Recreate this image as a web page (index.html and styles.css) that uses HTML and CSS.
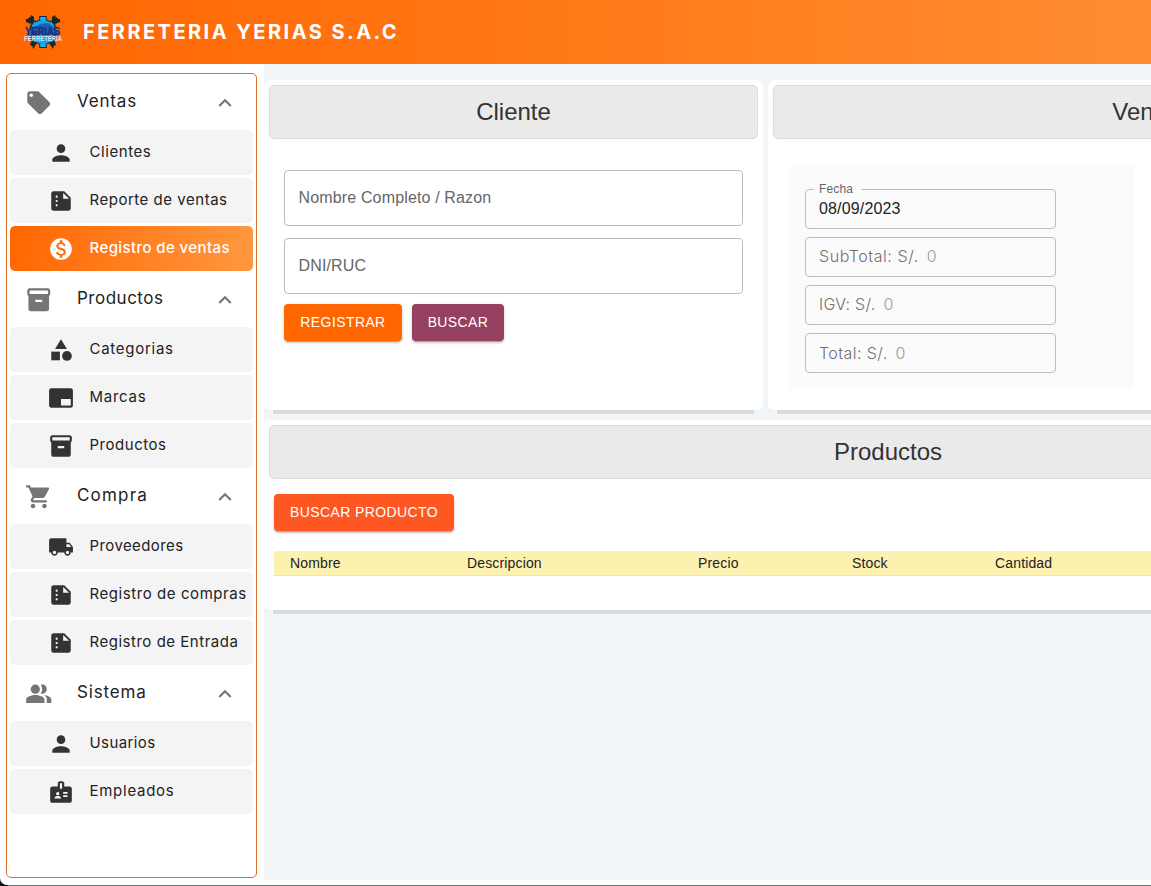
FILE: index.html
```html
<!DOCTYPE html>
<html lang="es">
<head>
<meta charset="utf-8">
<title>Ferreteria Yerias S.A.C</title>
<link rel="stylesheet" href="styles.css">
</head>
<body>
<svg class="sprite" width="0" height="0" aria-hidden="true">
  <symbol id="tag" viewBox="0 0 24 24"><path d="M21.41 11.58l-9-9C12.05 2.22 11.55 2 11 2H4c-1.1 0-2 .9-2 2v7c0 .55.22 1.05.59 1.42l9 9c.36.36.86.58 1.41.58s1.05-.22 1.41-.59l7-7c.37-.36.59-.86.59-1.41s-.23-1.06-.59-1.42zM5.5 7C4.67 7 4 6.33 4 5.5S4.67 4 5.5 4 7 4.67 7 5.5 6.33 7 5.5 7z"/></symbol>
  <symbol id="person" viewBox="0 0 24 24"><path d="M12 12c2.21 0 4-1.79 4-4s-1.79-4-4-4-4 1.79-4 4 1.79 4 4 4zm0 2c-2.67 0-8 1.34-8 4v2h16v-2c0-2.66-5.33-4-8-4z"/></symbol>
  <symbol id="report" viewBox="0 0 24 24"><path d="M15 3H5c-1.1 0-1.99.9-1.99 2L3 19c0 1.1.89 2 1.99 2H19c1.1 0 2-.9 2-2V9l-6-6zM8 17c-.55 0-1-.45-1-1s.45-1 1-1 1 .45 1 1-.45 1-1 1zm0-4c-.55 0-1-.45-1-1s.45-1 1-1 1 .45 1 1-.45 1-1 1zm0-4c-.55 0-1-.45-1-1s.45-1 1-1 1 .45 1 1-.45 1-1 1zm6 1V4.5l5.5 5.5H14z"/></symbol>
  <symbol id="money" viewBox="0 0 24 24"><path d="M12 2C6.48 2 2 6.48 2 12s4.48 10 10 10 10-4.48 10-10S17.52 2 12 2zm1.41 16.09V20h-2.67v-1.93c-1.71-.36-3.16-1.46-3.27-3.4h1.96c.1 1.05.82 1.87 2.65 1.87 1.96 0 2.4-.98 2.4-1.59 0-.83-.44-1.61-2.67-2.14-2.48-.6-4.18-1.62-4.18-3.67 0-1.72 1.39-2.84 3.11-3.21V4h2.67v1.95c1.86.45 2.79 1.86 2.85 3.39H14.3c-.05-1.11-.64-1.87-2.22-1.87-1.5 0-2.4.68-2.4 1.64 0 .84.65 1.39 2.67 1.91s4.18 1.39 4.18 3.91c-.01 1.83-1.38 2.83-3.12 3.16z"/></symbol>
  <symbol id="box" viewBox="0 0 24 24"><path d="M20 2H4c-1 0-2 .9-2 2v3.01c0 .72.43 1.34 1 1.69V20c0 1.1 1.1 2 2 2h14c.9 0 2-.9 2-2V8.7c.57-.35 1-.97 1-1.69V4c0-1.1-1-2-2-2zm-5 12H9v-2h6v2zm5-7H4V4h16v3z"/></symbol>
  <symbol id="shapes" viewBox="0 0 24 24"><path d="M12 2l-5.500 9h11z"/><circle cx="17.5" cy="17.5" r="4.5"/><path d="M3 13.5h8v8H3z"/></symbol>
  <symbol id="brand" viewBox="0 0 24 24"><path d="M21 3H3c-1.1 0-2 .9-2 2v14c0 1.100.9 2 2 2h18c1.100 0 2-.9 2-2V5c0-1.100-.9-2-2-2zm0 16h-9v-6h9v6z"/></symbol>
  <symbol id="cart" viewBox="0 0 24 24"><path d="M7 18c-1.1 0-1.99.9-1.99 2S5.900 22 7 22s2-.9 2-2-.9-2-2-2zM1 2v2h2l3.6 7.59-1.35 2.45c-.16.28-.25.61-.25.96 0 1.1.9 2 2 2h12v-2H7.42c-.14 0-.25-.11-.25-.25l.03-.12.9-1.63h7.45c.75 0 1.41-.41 1.75-1.03l3.58-6.49c.08-.14.12-.31.12-.48 0-.55-.45-1-1-1H5.21l-.94-2H1zm16 16c-1.1 0-1.99.9-1.99 2s.89 2 1.99 2 2-.9 2-2-.9-2-2-2z"/></symbol>
  <symbol id="truck" viewBox="0 0 24 24"><path d="M20 8h-3V4H3c-1.1 0-2 .9-2 2v11h2c0 1.66 1.34 3 3 3s3-1.34 3-3h6c0 1.66 1.34 3 3 3s3-1.34 3-3h2v-5l-3-4zM6 18.5c-.83 0-1.5-.67-1.5-1.5s.67-1.5 1.5-1.5 1.5.67 1.5 1.5-.67 1.5-1.5 1.5zm13.5-9l1.96 2.5H17V9.5h2.5zm-1.5 9c-.83 0-1.5-.67-1.5-1.5s.67-1.5 1.5-1.5 1.5.67 1.5 1.5-.67 1.5-1.5 1.5z"/></symbol>
  <symbol id="people" viewBox="0 0 24 24"><path d="M16.67 13.13C18.04 14.06 19 15.32 19 17v3h4v-3c0-2.18-3.57-3.47-6.33-3.87z"/><circle cx="9" cy="8" r="4"/><path d="M15 12c2.21 0 4-1.79 4-4s-1.79-4-4-4c-.47 0-.91.1-1.33.24C14.5 5.27 15 6.58 15 8s-.5 2.73-1.33 3.76c.42.14.86.24 1.33.24zM9 13c-2.67 0-8 1.34-8 4v3h16v-3c0-2.66-5.33-4-8-4z"/></symbol>
  <symbol id="badge" viewBox="0 0 24 24"><path d="M20 7h-5V4c0-1.1-.9-2-2-2h-2c-1.1 0-2 .9-2 2v3H4c-1.1 0-2 .9-2 2v11c0 1.1.9 2 2 2h16c1.1 0 2-.9 2-2V9c0-1.1-.9-2-2-2zM9 12c.83 0 1.5.67 1.5 1.5S9.83 15 9 15s-1.5-.67-1.5-1.5S8.17 12 9 12zm3 6H6v-.75c0-1 2-1.5 3-1.5s3 .5 3 1.5V18zm1-9h-2V4h2v5zm5 7.5h-4V15h4v1.5zm0-3h-4V12h4v1.5z"/></symbol>
  <symbol id="less" viewBox="0 0 24 24"><path d="M12 8l-6 6 1.41 1.41L12 10.83l4.59 4.58L18 14z"/></symbol>
</svg>
<div class="app">
  <header class="topbar">
    <svg class="logo" viewBox="0 0 40 36">
      <g stroke="#16272c" stroke-width="3.6" stroke-linecap="round"><path d="M7 5L31 30M33 5L9 30"/></g>
      <g fill="#16272c"><path d="M8 1l3 2v5l-3 2-5-2 0-3 4 0z"/><path d="M32 1l-3 2v5l3 2 5-2 0-3-4 0z"/><path d="M8 26l6 3-4 6zM32 26l-6 3 4 6z"/></g>
      <g stroke="#12303c" stroke-width="7.500"><path d="M20 2v32M9 9l22 18M31 9L9 27"/></g>
      <circle cx="20" cy="18" r="13" fill="#12303c"/>
      <g stroke="#12b4f2" stroke-width="5.500"><path d="M20 3v30M10 10l20 16M30 10L10 26"/></g>
      <circle cx="20" cy="18" r="12" fill="#12a6e6"/>
      <path d="M9 14l8-4 8-1 6 4 5 8H4z" fill="#1b62b8"/>
      <text class="logo-name" x="2" y="21" textLength="35" lengthAdjust="spacingAndGlyphs">YERIAS</text>
      <text class="logo-sub" x="1" y="27" textLength="38" lengthAdjust="spacingAndGlyphs">FERRETERIA</text>
    </svg>
    <h1 class="company">FERRETERIA YERIAS S.A.C</h1>
  </header>
  <div class="body">
    <aside class="side">
      <nav class="menu">
        <div class="group"><svg class="gicon"><use href="#tag"/></svg><span class="glabel g-ventas">Ventas</span><svg class="chev"><use href="#less"/></svg></div>
        <div class="items">
          <a class="item"><svg class="icon"><use href="#person"/></svg><span class="t-clientes">Clientes</span></a>
          <a class="item"><svg class="icon"><use href="#report"/></svg><span class="t-reporte">Reporte de ventas</span></a>
          <a class="item active"><svg class="icon"><use href="#money"/></svg><span class="t-registro">Registro de ventas</span></a>
        </div>
        <div class="group"><svg class="gicon"><use href="#box"/></svg><span class="glabel g-productos">Productos</span><svg class="chev"><use href="#less"/></svg></div>
        <div class="items">
          <a class="item"><svg class="icon"><use href="#shapes"/></svg><span class="t-categorias">Categorias</span></a>
          <a class="item"><svg class="icon"><use href="#brand"/></svg><span class="t-marcas">Marcas</span></a>
          <a class="item"><svg class="icon"><use href="#box"/></svg><span class="t-productos">Productos</span></a>
        </div>
        <div class="group"><svg class="gicon"><use href="#cart"/></svg><span class="glabel g-compra">Compra</span><svg class="chev"><use href="#less"/></svg></div>
        <div class="items">
          <a class="item"><svg class="icon"><use href="#truck"/></svg><span class="t-proveedores">Proveedores</span></a>
          <a class="item"><svg class="icon"><use href="#report"/></svg><span class="t-compras">Registro de compras</span></a>
          <a class="item"><svg class="icon"><use href="#report"/></svg><span class="t-entrada">Registro de Entrada</span></a>
        </div>
        <div class="group"><svg class="gicon"><use href="#people"/></svg><span class="glabel g-sistema">Sistema</span><svg class="chev"><use href="#less"/></svg></div>
        <div class="items">
          <a class="item"><svg class="icon"><use href="#person"/></svg><span class="t-usuarios">Usuarios</span></a>
          <a class="item"><svg class="icon"><use href="#badge"/></svg><span class="t-empleados">Empleados</span></a>
        </div>
      </nav>
    </aside>
    <main class="main">
      <div class="content">
        <div class="row">
          <section class="card client">
            <h2 class="title">Cliente</h2>
            <div class="form">
              <div class="field big">Nombre Completo / Razon</div>
              <div class="field big">DNI/RUC</div>
              <div class="buttons">
                <button class="btn orange">REGISTRAR</button>
                <button class="btn plum">BUSCAR</button>
              </div>
            </div>
          </section>
          <section class="card sale">
            <h2 class="title">Venta</h2>
            <div class="totals">
              <div class="field small date"><span class="legend">Fecha</span>08/09/2023</div>
              <div class="field small"><span class="l-sub">SubTotal: S/.</span><span class="zero">0</span></div>
              <div class="field small"><span class="l-igv">IGV: S/.</span><span class="zero">0</span></div>
              <div class="field small total"><span class="l-total">Total: S/.</span><span class="zero">0</span></div>
            </div>
          </section>
        </div>
        <section class="card products">
          <h2 class="title">Productos</h2>
          <button class="btn deep">BUSCAR PRODUCTO</button>
          <div class="thead"><span>Nombre</span><span>Descripcion</span><span>Precio</span><span>Stock</span><span>Cantidad</span></div>
        </section>
      </div>
    </main>
  </div>
</div>
</body>
</html>
```

FILE: styles.css
```css
* { box-sizing: border-box; }
body { margin: 0; height: 886px; overflow: hidden; background: linear-gradient(90deg, #0d1415 0 8px, #647275 8px); font-family: "Liberation Sans", Arial, sans-serif; }
.sprite { position: absolute; }
.app { height: 885px; background: #fff; border-bottom-left-radius: 7px; overflow: hidden; display: flex; flex-direction: column; }
.topbar { height: 64px; flex: none; display: flex; align-items: center; padding-left: 23px; background: linear-gradient(90deg, #ff6600 0, #ff8d31 1151px); }
.logo { width: 40px; height: 36px; margin-right: 20px; overflow: visible; }
.logo-name { font: 700 10px "Liberation Sans", Arial, sans-serif; fill: #293591; stroke: #17245f; stroke-width: .4px; }
.logo-sub { font: 700 6.500px "Liberation Sans", Arial, sans-serif; fill: #dce5f2; }
.company { margin: 0; color: #fff; font: 700 20px/30px Inter, sans-serif; letter-spacing: 2.46px; white-space: nowrap; }

.body { display: flex; height: 816px; }
.side { width: 264px; flex: none; padding: 9px 7px 2px 6px; }
.menu { height: 805px; border: 1px solid #d96f26; border-radius: 5px; padding: 0 3px; font-family: Inter, sans-serif; color: #222; }
.group { height: 56px; display: flex; align-items: center; padding: 0 15.500px 0 14.500px; }
.gicon { width: 27.500px; height: 27.500px; fill: #757575; margin: 1px 25px 0 0; }
.glabel { flex: 1; font-size: 17px; line-height: 24px; padding-bottom: 2px; white-space: nowrap; }
.g-ventas, .g-sistema { letter-spacing: .85px; }
.g-productos { letter-spacing: .5px; }
.g-compra { letter-spacing: 1.2px; }
.chev { width: 26px; height: 26px; margin-top: 1px; fill: #757575; }
.items { display: flex; flex-direction: column; gap: 3px; }
.item { height: 45px; display: flex; align-items: center; padding-left: 38px; gap: 15.500px; border-radius: 5px; background: #f4f4f4; font-size: 15px; line-height: 22px; white-space: nowrap; }
.item span { padding-bottom: 2px; }
.t-clientes, .t-compras { letter-spacing: .57px; }
.t-reporte, .t-entrada, .t-productos { letter-spacing: .52px; }
.t-registro, .t-proveedores, .t-usuarios { letter-spacing: .4px; }
.t-categorias, .t-marcas, .t-empleados { letter-spacing: .73px; }
.icon { width: 26px; height: 26px; fill: #333; flex: none; }
.active { background: linear-gradient(100deg, #ff6600, #ff983f); color: #fff; font-weight: 500; }
.active .icon { fill: #fff; }

.main { flex: 1; min-width: 0; overflow: hidden; background: #f1f5f8; padding-top: 16px; }
.content { width: 1248px; display: flex; flex-direction: column; gap: 10px; }
.row { display: flex; gap: 5px; }
.card { background: #fff; border-radius: 6px; padding: 5px; position: relative; flex: none; }
.card::after { content: ""; position: absolute; left: 9px; right: 9px; top: 100%; height: 4px; background: #d7dbde; }
.client { width: 499px; height: 330px; }
.sale { width: 750px; height: 330px; }
.products { height: 190px; }
.title { margin: 0; height: 54px; border: 1px solid #dcdcdc; border-radius: 5px; background: #eaeaea; color: #333; font-size: 24px; font-weight: 400; line-height: 52px; text-align: center; }
.form { padding: 31px 15px 0; display: flex; flex-direction: column; gap: 12px; }
.field { border: 1px solid #bcbcbc; border-radius: 4px; padding: 0 13.500px; font-size: 16px; letter-spacing: .15px; color: #666; white-space: nowrap; }
.big { height: 56px; line-height: 54px; }
.buttons { display: flex; gap: 10px; margin-top: -2px; }
.btn { border: 0; border-radius: 4px; height: 37px; padding: 0 0 1px; font: 400 14px/34px "Liberation Sans", Arial, sans-serif; letter-spacing: .4px; color: #fff; box-shadow: 0 3px 1px -2px rgba(0,0,0,.2), 0 2px 2px rgba(0,0,0,.14), 0 1px 4px rgba(0,0,0,.12); }
.orange { width: 118px; background: #ff6600; }
.plum { width: 92px; background: #953f61; }
.deep { display: block; width: 180px; margin: 15px 0 0 5px; background: #ff5722; }
.totals { width: 345px; height: 224px; margin: 26px 0 0 16px; padding: 24px 16px 0; background: #fbfbfb; border-radius: 4px; display: flex; flex-direction: column; gap: 8px; }
.small { flex: none; width: 251px; height: 40px; line-height: 37px; padding-left: 13px; position: relative; display: flex; font-family: Inter, sans-serif; font-weight: 300; color: #707070; }
.small span { flex: none; }
.total { line-height: 38px; }
.l-sub { letter-spacing: .58px; }
.l-igv { letter-spacing: .3px; }
.l-total { letter-spacing: .42px; }
.date { font-family: "Liberation Sans", Arial, sans-serif; font-weight: 400; color: #222; letter-spacing: .15px; line-height: 38px; }
.legend { position: absolute; left: 8px; top: -8px; padding: 0 5px; width: 47px; background: #fbfbfb; font-size: 12px; line-height: 14px; letter-spacing: .15px; color: #666; }
.zero { margin-left: 8px; color: #999; }
.thead { margin: 20px 0 0 5px; width: 1228px; height: 25px; background: #fdf1b0; border-bottom: 1px solid #e0e0e0; display: grid; grid-template-columns: 177px 231px 154px 143px 1fr; padding-left: 16px; font-size: 14px; line-height: 24px; letter-spacing: .15px; color: #222; }
```
